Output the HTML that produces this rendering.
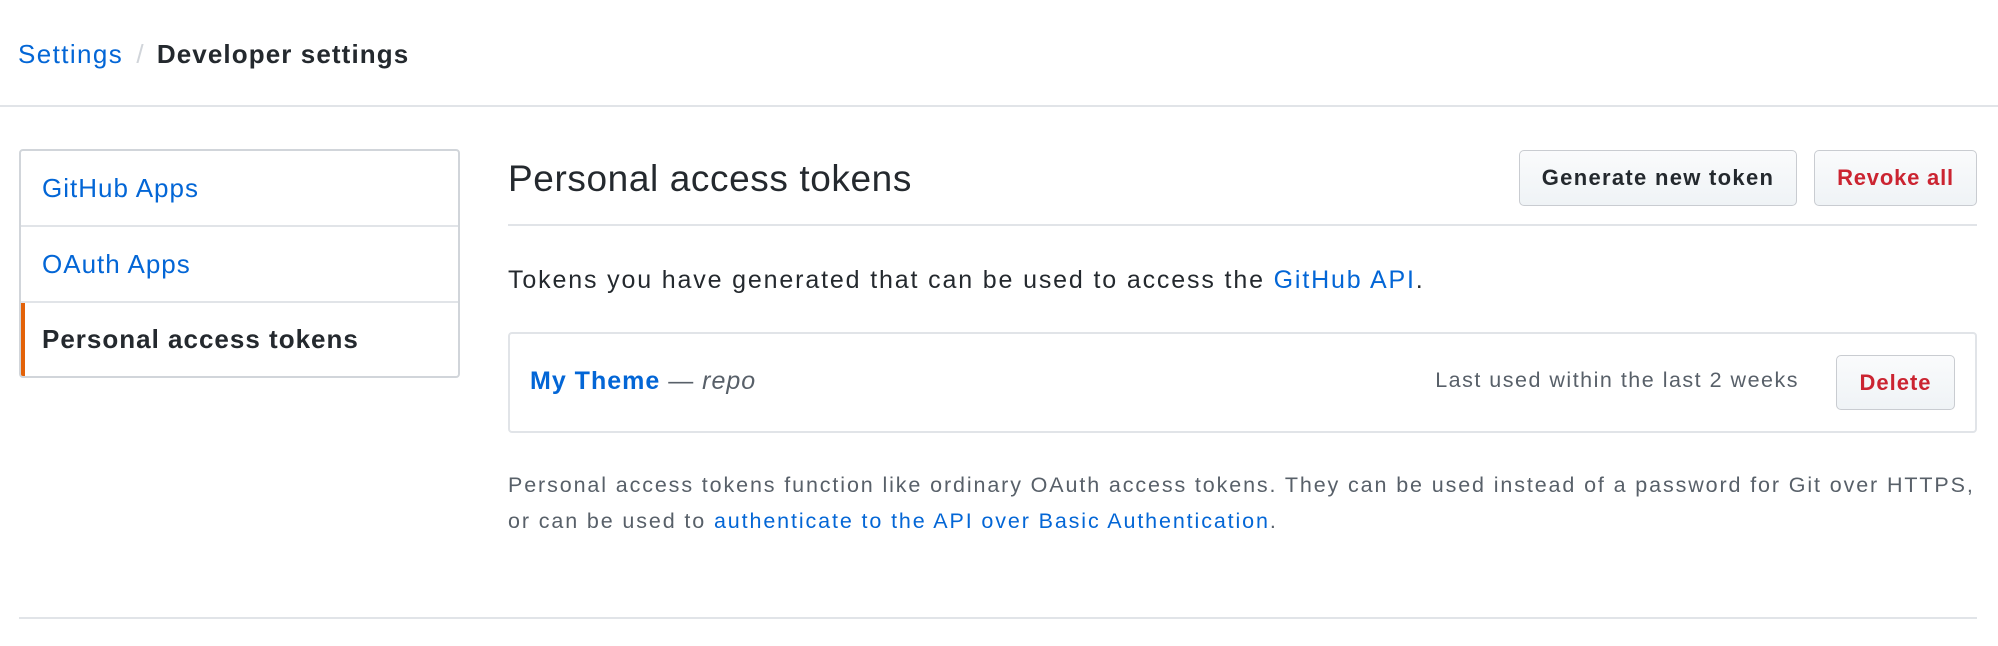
<!DOCTYPE html>
<html><head><meta charset="utf-8"><style>
*{box-sizing:border-box;margin:0;padding:0}
body{width:1998px;height:646px;background:#fff;font-family:"Liberation Sans",Arial,sans-serif;color:#24292e;position:relative;overflow:hidden}
.a{position:absolute;white-space:nowrap}
.blue{color:#0366d6}
.btn{position:absolute;border:1px solid #c9ccd1;border-radius:5px;background:linear-gradient(#fafbfc,#eff3f6);font-weight:bold;font-size:22px;display:flex;align-items:center;justify-content:center}
</style></head><body>
<div class="a" style="left:18px;top:38px;font-size:26px;line-height:32px"><span class="blue" style="letter-spacing:1.4px">Settings</span> <span style="color:#d1d5da;margin:0 6px">/</span> <b style="letter-spacing:1.1px">Developer settings</b></div>
<div class="a" style="left:0;top:105px;width:1998px;height:2px;background:#e1e4e8"></div>

<div class="a" style="left:19px;top:149px;width:441px;height:229px;border:2px solid #d1d5da;border-radius:4px;overflow:hidden;letter-spacing:1px">
 <div style="height:76px;border-bottom:2px solid #e1e4e8;padding-left:21px;font-size:26px;line-height:74px" class="blue">GitHub Apps</div>
 <div style="height:76px;border-bottom:2px solid #e1e4e8;padding-left:21px;font-size:26px;line-height:74px" class="blue">OAuth Apps</div>
 <div style="height:73px;border-left:4px solid #e36209;padding-left:17px;font-size:26px;line-height:73px;font-weight:bold">Personal access tokens</div>
</div>

<div class="a" style="left:508px;top:157px;font-size:37px;line-height:44px;letter-spacing:0.6px">Personal access tokens</div>
<div class="btn" style="left:1519px;top:150px;width:278px;height:56px;color:#24292e;letter-spacing:1.3px">Generate new token</div>
<div class="btn" style="left:1814px;top:150px;width:163px;height:56px;color:#cb2431;letter-spacing:0.8px">Revoke all</div>
<div class="a" style="left:508px;top:224px;width:1469px;height:2px;background:#e1e4e8"></div>

<div class="a" style="left:508px;top:265px;font-size:25px;line-height:30px;letter-spacing:1.85px">Tokens you have generated that can be used to access the <span class="blue">GitHub API</span>.</div>

<div class="a" style="left:508px;top:332px;width:1469px;height:101px;border:2px solid #e1e4e8;border-radius:4px"></div>
<div class="a" style="left:530px;top:366px;font-size:25px;line-height:30px;letter-spacing:1px"><b class="blue">My Theme</b> <span style="color:#586069">— <i>repo</i></span></div>
<div class="a" style="right:199px;top:367px;font-size:21.5px;line-height:26px;color:#586069;letter-spacing:1.5px">Last used within the last 2 weeks</div>
<div class="btn" style="left:1836px;top:355px;width:119px;height:55px;color:#cb2431;letter-spacing:1px">Delete</div>

<div class="a" style="left:508px;top:467px;font-size:21.5px;line-height:36px;color:#586069;letter-spacing:1.88px">Personal access tokens function like ordinary OAuth access tokens. They can be used instead of a password for Git over HTTPS,<br>or can be used to <span class="blue">authenticate to the API over Basic Authentication</span>.</div>

<div class="a" style="left:19px;top:617px;width:1958px;height:2px;background:#e1e4e8"></div>
</body></html>
